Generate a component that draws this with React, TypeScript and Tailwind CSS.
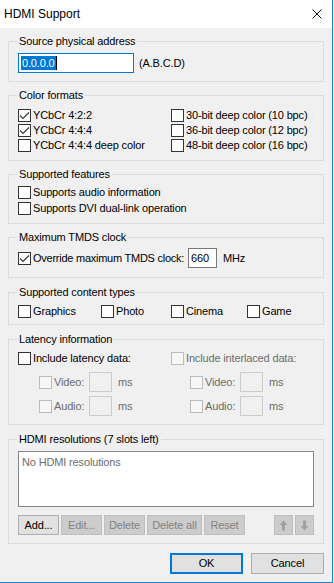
import React from 'react';

function Check({ checked = false, disabled = false }: { checked?: boolean; disabled?: boolean }) {
  return (
    <span
      className={
        disabled
          ? 'flex h-[13px] w-[13px] shrink-0 items-center justify-center border border-[#bcbcbc] bg-[#f7f7f7]'
          : 'flex h-[13px] w-[13px] shrink-0 items-center justify-center border border-[#333333] bg-white'
      }
    >
      {checked && (
        <svg width="11" height="11" viewBox="0 0 11 11">
          <path d="M1 5.5 L4 8.5 L10 2.5" stroke="#333333" strokeWidth="1.1" fill="none" />
        </svg>
      )}
    </span>
  );
}

function Option({ label, checked, disabled }: { label: string; checked?: boolean; disabled?: boolean }) {
  return (
    <div className="flex h-[16px] items-center gap-[2px]">
      <Check checked={checked} disabled={disabled} />
      <span className={disabled ? 'text-[#6d6d6d]' : 'text-black'}>{label}</span>
    </div>
  );
}

function Group({ title, className, children }: { title: string; className?: string; children: React.ReactNode }) {
  return (
    <fieldset className={`mx-[8px] border border-[#dcdcdc] px-[9px] ${className ?? ''}`}>
      <legend className="-ml-px px-[2px] leading-[14px]">{title}</legend>
      {children}
    </fieldset>
  );
}

function SubRow({ label }: { label: string }) {
  return (
    <div className="flex h-[20px] items-center">
      <Check disabled />
      <span className="ml-[2px] w-[35px] text-[#6d6d6d]">{label}</span>
      <span className="h-[20px] w-[23px] border border-[#cccccc] bg-[#f0f0f0]" />
      <span className="ml-[6px] text-[#6d6d6d]">ms</span>
    </div>
  );
}

function Btn({ label, disabled, w }: { label: string; disabled?: boolean; w: string }) {
  return (
    <div
      className={
        disabled
          ? `flex h-[20px] ${w} items-center justify-center border border-[#bfbfbf] bg-[#cccccc] text-[#838383]`
          : `flex h-[20px] ${w} items-center justify-center border border-[#adadad] bg-[#e1e1e1] text-black`
      }
    >
      {label}
    </div>
  );
}

function ArrowBtn({ down }: { down?: boolean }) {
  return (
    <div className="flex h-[20px] w-[19px] items-center justify-center border border-[#bfbfbf] bg-[#cccccc]">
      <svg width="9" height="11" viewBox="0 0 9 11" className={down ? 'rotate-180' : ''}>
        <path d="M4.5 0.5 L8.5 5 L6 5 L6 10.5 L3 10.5 L3 5 L0.5 5 Z" fill="#a0a0a0" />
      </svg>
    </div>
  );
}

export default function App() {
  return (
    <div className="h-[583px] w-[334px] whitespace-nowrap bg-white font-['Liberation_Sans',Arial,sans-serif] text-[11px] tracking-[-0.15px] text-black">
      <div className="flex h-[583px] w-[333px] flex-col border-r border-b border-[#1883d7] bg-[#f0f0f0]">
        {/* Title bar */}
        <div className="flex h-[28px] shrink-0 items-center justify-between bg-white pl-[4px] pr-[10px]">
          <span className="text-[12px] tracking-normal">HDMI Support</span>
          <svg width="10" height="10" viewBox="0 0 10 10">
            <path d="M0.5 0.5 L9.5 9.5 M9.5 0.5 L0.5 9.5" stroke="#111" strokeWidth="1" />
          </svg>
        </div>

        <Group title="Source physical address" className="mt-[6px] pt-[5px] pb-[8px]">
          <div className="flex items-center">
            <div className="flex h-[20px] w-[116px] items-center border border-[#0078d7] bg-white pl-[2px]">
              <span className="bg-[#0078d7] px-px leading-[14px] text-white">0.0.0.0</span>
              <span className="h-[14px] w-px bg-black" />
            </div>
            <span className="ml-[5px]">(A.B.C.D)</span>
          </div>
        </Group>

        <Group title="Color formats" className="mt-[6px] pt-[6px] pb-[7px]">
          <div className="grid grid-cols-[153px_1fr] [&>div]:h-[15px]">
            <Option label="YCbCr 4:2:2" checked />
            <Option label="30-bit deep color (10 bpc)" />
            <Option label="YCbCr 4:4:4" checked />
            <Option label="36-bit deep color (12 bpc)" />
            <Option label="YCbCr 4:4:4 deep color" />
            <Option label="48-bit deep color (16 bpc)" />
          </div>
        </Group>

        <Group title="Supported features" className="mt-[6px] pt-[3px] pb-[7px]">
          <Option label="Supports audio information" />
          <Option label="Supports DVI dual-link operation" />
        </Group>

        <Group title="Maximum TMDS clock" className="mt-[6px] pt-[4px] pb-[9px]">
          <div className="flex h-[20px] items-center">
            <Check checked />
            <span className="ml-[2px] w-[155px] tracking-[-0.25px]">Override maximum TMDS clock:</span>
            <span className="flex h-[20px] w-[29px] items-center border border-[#7a7a7a] bg-white pl-[2px]">660</span>
            <span className="ml-[6px]">MHz</span>
          </div>
        </Group>

        <Group title="Supported content types" className="mt-[7px] pt-[4px] pb-[5px]">
          <div className="grid grid-cols-[83px_70px_76px_1fr]">
            <Option label="Graphics" />
            <Option label="Photo" />
            <Option label="Cinema" />
            <Option label="Game" />
          </div>
        </Group>

        <Group title="Latency information" className="mt-[7px] pt-[4px] pb-[8px]">
          <div className="grid grid-cols-[153px_1fr]">
            <div>
              <Option label="Include latency data:" />
              <div className="mt-[6px] flex flex-col gap-[4px] pl-[21px]">
                <SubRow label="Video:" />
                <SubRow label="Audio:" />
              </div>
            </div>
            <div>
              <Option label="Include interlaced data:" disabled />
              <div className="mt-[6px] flex flex-col gap-[4px] pl-[19px]">
                <SubRow label="Video:" />
                <SubRow label="Audio:" />
              </div>
            </div>
          </div>
        </Group>

        <Group title="HDMI resolutions (7 slots left)" className="mt-[7px] pt-[5px] pb-[8px]">
          <div className="h-[56px] border border-[#828790] bg-white px-[3px] pt-[2px] text-[#6d6d6d]">No HDMI resolutions</div>
          <div className="mt-[8px] flex items-center gap-[2px]">
            <Btn label="Add..." w="w-[41px]" />
            <Btn label="Edit..." w="w-[41px]" disabled />
            <Btn label="Delete" w="w-[41px]" disabled />
            <Btn label="Delete all" w="w-[55px]" disabled />
            <Btn label="Reset" w="w-[41px]" disabled />
            <div className="ml-auto flex gap-[2px]">
              <ArrowBtn />
              <ArrowBtn down />
            </div>
          </div>
        </Group>

        <div className="mt-[9px] flex justify-end gap-[8px] pr-[8px]">
          <div className="flex h-[21px] w-[73px] items-center justify-center border-2 border-[#0078d7] bg-[#e1e1e1]">OK</div>
          <div className="flex h-[21px] w-[73px] items-center justify-center border border-[#adadad] bg-[#e1e1e1]">Cancel</div>
        </div>
      </div>
    </div>
  );
}
